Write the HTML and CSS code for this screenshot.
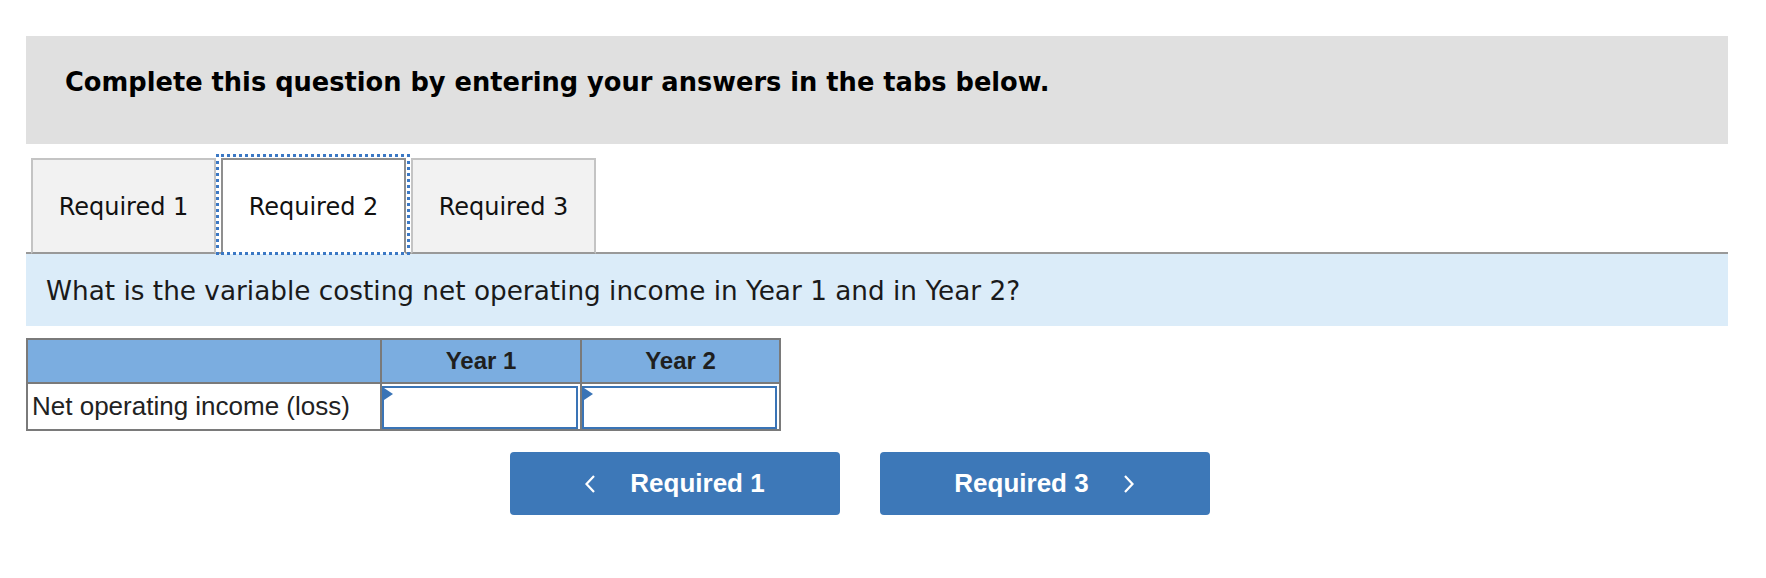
FILE: index.html
```html
<!DOCTYPE html>
<html lang="en">
<head>
    <meta charset="UTF-8">
    <meta name="viewport" content="width=device-width, initial-scale=1.0">
    <title>Required 2</title>
    <link rel="stylesheet" href="styles.css">
</head>
<body>
    <div class="page">
        <div class="instructions">
            <h2>Complete this question by entering your answers in the tabs below.</h2>
        </div>

        <div class="tabs">
            <button class="tab">Required 1</button>
            <button class="tab active">Required 2</button>
            <button class="tab">Required 3</button>
        </div>

        <div class="prompt">
            What is the variable costing net operating income in Year 1 and in Year 2?
        </div>

        <div class="answer-grid">
            <div class="head blank"></div>
            <div class="head">Year 1</div>
            <div class="head">Year 2</div>

            <div class="label">Net operating income (loss)</div>
            <div class="cell"><input type="text" class="entry"></div>
            <div class="cell"><input type="text" class="entry"></div>
        </div>

        <div class="nav">
            <button class="nav-button">
                <svg class="chevron" width="12" height="18" viewBox="0 0 12 18">
                    <polyline points="10,1 2.5,9 10,17" fill="none" stroke="#fff" stroke-width="2.2"/>
                </svg>
                <span>Required 1</span>
            </button>
            <button class="nav-button">
                <span>Required 3</span>
                <svg class="chevron" width="12" height="18" viewBox="0 0 12 18">
                    <polyline points="2,1 9.5,9 2,17" fill="none" stroke="#fff" stroke-width="2.2"/>
                </svg>
            </button>
        </div>
    </div>
</body>
</html>
```

FILE: styles.css
```css
* {
    margin: 0;
    padding: 0;
    box-sizing: border-box;
}

body {
    background: #fff;
    font-family: 'DejaVu Sans', Verdana, sans-serif;
    color: #111;
}

.page {
    padding: 36px 38px 0 26px;
}

.instructions {
    background: #e0e0e0;
    height: 108px;
    padding: 31px 39px 0;
}

.instructions h2 {
    font-size: 25.7px;
    line-height: 30px;
    font-weight: bold;
    color: #000;
}

.tabs {
    display: flex;
    gap: 5px;
    margin-top: 14px;
    padding-left: 5px;
    border-bottom: 2px solid #999;
}

.tab {
    width: 185px;
    height: 96px;
    padding-top: 2px;
    margin-bottom: -2px;
    border: 2px solid #c4c4c4;
    border-bottom: 2px solid #999;
    background: #f2f2f2;
    font-family: 'DejaVu Sans', Verdana, sans-serif;
    font-size: 24px;
    color: #111;
    cursor: pointer;
}

.tab.active {
    position: relative;
    background: #fff;
    border-color: #8f8f8f;
    border-bottom-color: #fff;
}

/* focus ring drawn around the selected tab */
.tab.active::after {
    content: "";
    position: absolute;
    top: -6px;
    left: -7px;
    right: -6px;
    bottom: -3px;
    border: 3px dotted #3b78c4;
}

.prompt {
    background: #dbecf9;
    height: 72px;
    padding: 22px 20px 20px;
    font-size: 26.3px;
    line-height: 30px;
    color: #1a1a1a;
}

.answer-grid {
    display: grid;
    grid-template-columns: 352px 198px 197px;
    grid-template-rows: 42px 45px;
    gap: 2px;
    width: max-content;
    margin-top: 12px;
    background: #7a7a7a;
    border: 2px solid #7a7a7a;
    font-family: 'Liberation Sans', Arial, sans-serif;
}

.head {
    background: #7badE0;
    display: flex;
    align-items: center;
    justify-content: center;
    font-size: 24px;
    font-weight: bold;
    color: #1f1f1f;
}

.label {
    background: #fff;
    display: flex;
    align-items: center;
    padding-left: 4px;
    font-size: 26px;
    color: #222;
}

.cell {
    background: #fff;
    padding: 2px 2px 0 0;
    position: relative;
}

.cell::before {
    content: "";
    position: absolute;
    left: 2px;
    top: 4px;
    border-top: 6.5px solid transparent;
    border-bottom: 6.5px solid transparent;
    border-left: 9px solid #3a74b6;
}

.entry {
    width: 100%;
    height: 100%;
    border: 2px solid #3a74b6;
    font-size: 22px;
    font-family: 'Liberation Sans', Arial, sans-serif;
    text-align: right;
    padding: 0 6px;
}

.entry:focus {
    outline: none;
}

.nav {
    display: flex;
    justify-content: center;
    gap: 40px;
    margin-top: 21px;
    padding-right: 35px;
}

.nav-button {
    width: 330px;
    height: 63px;
    display: flex;
    align-items: center;
    justify-content: center;
    gap: 34px;
    background: #3d78b8;
    border: none;
    border-radius: 4px;
    color: #fff;
    font-family: 'Liberation Sans', Arial, sans-serif;
    font-size: 26px;
    font-weight: bold;
    cursor: pointer;
}

.chevron {
    display: block;
}
```
